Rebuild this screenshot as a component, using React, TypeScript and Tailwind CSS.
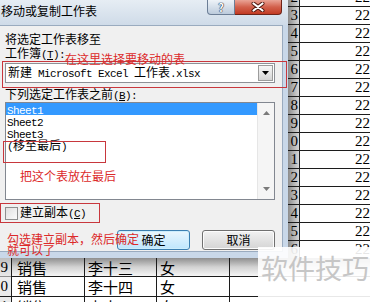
import React from 'react';

// latin runs in the dialog are half-width, like SimSun 12px
const Mono = ({ children }: { children: React.ReactNode }) => (
  <span className="font-['Liberation_Mono',monospace] text-[11px] tracking-[-0.6px]">{children}</span>
);

const sideRows = [2, 3, 4, 5, 6, 7, 8, 9, 0, 1, 2, 3, 4, 5, 6];

const bottomRows = [
  { n: '9', dept: '销售', name: '李十三', sex: '女', shade: true },
  { n: '10', dept: '销售', name: '李十四', sex: '女', shade: false },
  { n: '11', dept: '销售', name: '李十五', sex: '女', shade: false },
];

const Dialog = () => (
  <div className="flex h-[258px] w-[288px] flex-col bg-[#c9d8e9]">
    {/* title bar */}
    <div className="flex h-[25px] items-start justify-between bg-linear-to-b from-[#e6edf4] to-[#cfdbe8] pr-[6px]">
      <span className="pl-[1px] pt-[4px] text-[12px] leading-[13px]">移动或复制工作表</span>
      <div className="flex">
        <div className="flex h-[15px] w-[28px] items-center justify-center rounded-bl-[4px] border border-t-0 border-[#6c7e96] bg-linear-to-b from-[#eef3f8] to-[#bccbdc]">
          <span className="text-[11px] font-bold leading-[11px] text-white [text-shadow:0_0_1px_#1d2c44,0_0_1px_#1d2c44,0_0_1px_#1d2c44]">?</span>
        </div>
        <div className="flex h-[15px] w-[47px] items-center justify-center rounded-br-[4px] border border-l-0 border-t-0 border-[#6e2419] bg-linear-to-b from-[#e9a396] via-[#d2604c] to-[#c23a22]">
          <svg width="14" height="10" viewBox="0 0 14 10">
            <path d="M2.5 1.5L11.5 8.5M11.5 1.5L2.5 8.5" stroke="#4d160e" strokeWidth="4" strokeLinecap="round" />
            <path d="M2.5 1.5L11.5 8.5M11.5 1.5L2.5 8.5" stroke="#ffffff" strokeWidth="2.2" strokeLinecap="round" />
          </svg>
        </div>
      </div>
    </div>

    {/* client area */}
    <div className="flex flex-1 pb-[6px] pr-[5px]">
      <div className="flex flex-1 flex-col border-y border-r border-[#9aabbf] bg-[#f0f0f0] pl-[5px] pr-[7px] pt-[7px] text-[12px] leading-[12px]">
        <div className="h-[12px]">将选定工作表移至</div>
        <div className="mt-[2px] h-[12px]">
          工作簿<Mono>(<u>T</u>):</Mono>
        </div>

        <div className="mt-[4px] flex h-[20px] items-center border border-[#8d9096] bg-white pl-[2px] pr-[1px]">
          <span className="flex-1 whitespace-nowrap">
            新建<Mono> Microsoft Excel </Mono>工作表<Mono>.xlsx</Mono>
          </span>
          <div className="flex h-[16px] w-[15px] items-center justify-center border border-[#9c9c9c] bg-linear-to-b from-[#f7f7f7] to-[#d5d5d5]">
            <svg width="7" height="4" viewBox="0 0 7 4">
              <path d="M0 0h7L3.5 4z" fill="#000" />
            </svg>
          </div>
        </div>

        <div className="mt-[5px] h-[12px]">
          下列选定工作表之前<Mono>(<u>B</u>):</Mono>
        </div>

        <div className="mt-[2px] flex h-[98px] border border-[#828790] bg-white">
          <div className="flex-1">
            <div className="h-[12px] bg-[#3399ff] pl-[1px] text-white">
              <Mono>Sheet1</Mono>
            </div>
            <div className="h-[12px] pl-[1px]">
              <Mono>Sheet2</Mono>
            </div>
            <div className="h-[12px] pl-[1px]">
              <Mono>Sheet3</Mono>
            </div>
            <div className="h-[12px] pl-[1px]">
              <Mono>(</Mono>移至最后<Mono>)</Mono>
            </div>
          </div>
          <div className="flex w-[17px] flex-col items-center justify-between border-l border-[#e6e6e6] bg-[#f5f5f5] pb-[8px] pt-[8px]">
            <svg width="7" height="4" viewBox="0 0 7 4">
              <path d="M0 4h7L3.5 0z" fill="#7a7a7a" />
            </svg>
            <svg width="7" height="4" viewBox="0 0 7 4">
              <path d="M0 0h7L3.5 4z" fill="#7a7a7a" />
            </svg>
          </div>
        </div>

        <div className="mt-[6px] flex h-[14px] items-center gap-[2px]">
          <div className="h-[13px] w-[13px] border border-[#8e8f8f] bg-linear-to-br from-[#e0e0e0] to-[#fbfbfb]" />
          <span>
            建立副本<Mono>(<u>C</u>)</Mono>
          </span>
        </div>

        <div className="mt-[10px] flex justify-end gap-[12px]">
          <button className="flex h-[20px] w-[73px] items-center justify-center rounded-[3px] border border-[#3c7fb1] bg-linear-to-b from-[#eaf6fd] to-[#bee6fd] leading-[12px] shadow-[inset_0_0_0_1px_#cdeefd]">
            确定
          </button>
          <button className="flex h-[20px] w-[73px] items-center justify-center rounded-[3px] border border-[#707070] bg-linear-to-b from-[#f2f2f2] to-[#d4d4d4] leading-[12px] shadow-[inset_0_0_0_1px_#fcfcfc]">
            取消
          </button>
        </div>
      </div>
    </div>
  </div>
);

const SideSheet = () => (
  <div className="h-[258px] flex-1 overflow-hidden">
    <div className="mt-[-11px]">
      {sideRows.map((n, i) => (
        <div key={i} className="flex h-[18px] border-b border-[#1c1c1c]">
          <div className="w-[12px] border-r border-[#1c1c1c] bg-linear-to-r from-[#8c8c8c] to-[#d8d8d8] pr-[1px] text-right font-['Liberation_Serif',serif] text-[15px] leading-[17px]">
            {n}
          </div>
          <div className="flex-1 whitespace-nowrap bg-white pl-[55px] font-['Liberation_Serif',serif] text-[15px] leading-[17px]">
            22
          </div>
        </div>
      ))}
    </div>
  </div>
);

const App = () => {
  return (
    <div className="relative h-[302px] w-[370px] overflow-hidden bg-white font-['Noto_Sans_CJK_SC',sans-serif] text-black">
      <div className="flex">
        <Dialog />
        <SideSheet />
      </div>

      {/* rows of the sheet under the dialog */}
      <div className="text-[15px] leading-[18px]">
        {bottomRows.map((r, i) => (
          <div
            key={i}
            className={
              'grid grid-cols-[12px_73px_72px_73px_1fr] border-b border-[#1c1c1c] ' +
              (r.shade ? 'h-[19px] bg-linear-to-b from-[#8f8f8f] via-[#d2d2d2] to-[#f6f6f6]' : 'h-[20px]')
            }
          >
            <div className="overflow-hidden whitespace-nowrap border-r border-[#1c1c1c] bg-[#dedede]/60 text-right font-['Liberation_Serif',serif] leading-[19px]">
              <span className="mr-[3px]">{r.n.slice(-1)}</span>
            </div>
            <div className="border-r border-[#1c1c1c] pl-[5px] pt-[1px]">{r.dept}</div>
            <div className="border-r border-[#1c1c1c] pl-[3px] pt-[1px]">{r.name}</div>
            <div className="border-r border-[#1c1c1c] pl-[3px] pt-[1px]">{r.sex}</div>
            <div />
          </div>
        ))}
      </div>

      {/* red annotations drawn over the screenshot */}
      <div className="absolute left-[2px] top-[61px] h-[27px] w-[285px] border border-[#c8373d]" />
      <div className="absolute left-[65px] top-[53px] text-[12px] leading-[12px] text-[#dc2a2a]">在这里选择要移动的表</div>
      <div className="absolute left-[3px] top-[141px] h-[22px] w-[103px] border border-[#c8373d]" />
      <div className="absolute left-[20px] top-[170px] text-[12px] leading-[12px] text-[#dc2a2a]">把这个表放在最后</div>
      <div className="absolute left-0 top-[203px] h-[20px] w-[100px] border border-[#c8373d]" />
      <div className="absolute left-[7px] top-[233px] text-[12px] leading-[11px] text-[#dc2a2a]">
        <div>勾选建立副本，然后确定</div>
        <div>就可以了</div>
      </div>

      {/* watermark */}
      <div className="absolute bottom-0 right-0 h-[55px] w-[112px] bg-white/90 pl-[3px] pt-[5px]">
        <span className="whitespace-nowrap text-[27px] leading-[32px] text-[#c6c6c6]">软件技巧</span>
      </div>
    </div>
  );
};

export default App;
